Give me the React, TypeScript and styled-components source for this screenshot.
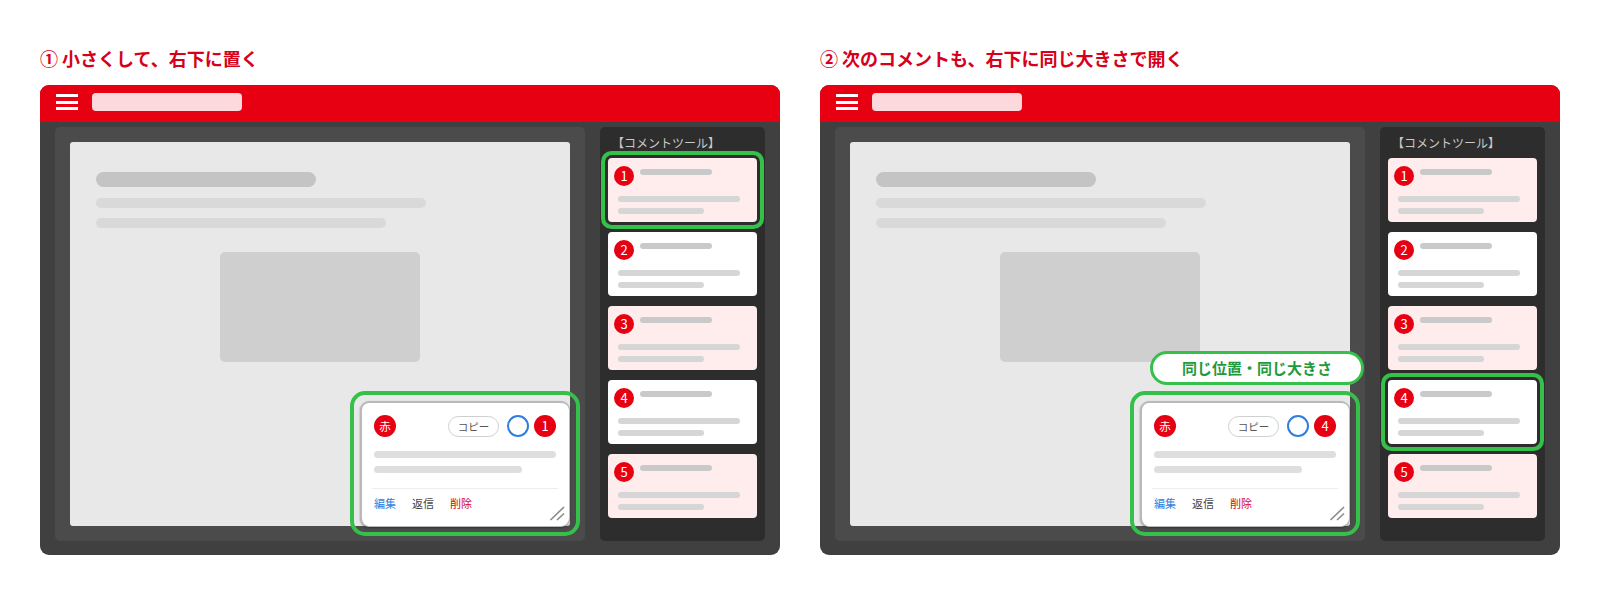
import React from "react";
import styled, { createGlobalStyle } from "styled-components";

const Global = createGlobalStyle`
  html, body { margin: 0; padding: 0; background: #fff; }
  body { font-family: "Noto Sans CJK JP", "Noto Sans", sans-serif; }
`;

const Page = styled.div`
  width: 1600px;
  height: 600px;
  box-sizing: border-box;
  padding: 45px 40px 0;
  display: grid;
  grid-template-columns: 740px 740px;
  column-gap: 40px;
`;
const Column = styled.section`
  display: flex;
  flex-direction: column;
`;
const Heading = styled.h2`
  margin: 0 0 14px;
  font-size: 18px;
  line-height: 26px;
  font-weight: 700;
  color: #d7001a;
`;
const Window = styled.div`
  height: 470px;
  border-radius: 9px;
  overflow: hidden;
  background: #404040;
  display: flex;
  flex-direction: column;
`;
const Header = styled.header`
  height: 37px;
  flex: none;
  background: #e60012;
  display: flex;
  align-items: center;
  padding: 0 16px 3px;
  box-sizing: border-box;
  gap: 14px;
`;
const Burger = styled.div`
  width: 22px;
  display: flex;
  flex-direction: column;
  gap: 3.5px;
  span { height: 3px; background: #fff; display: block; }
`;
const Search = styled.div`
  width: 150px;
  height: 18px;
  border-radius: 4px;
  background: #fbd9dc;
`;
const Body = styled.div`
  flex: 1;
  display: flex;
  gap: 15px;
  padding: 5px 15px 14px 15px;
`;
const Stage = styled.div`
  width: 530px;
  height: 414px;
  box-sizing: border-box;
  padding: 15px;
  background: #4b4b4b;
  border-radius: 5px;
`;
const Sheet = styled.div`
  position: relative;
  width: 500px;
  height: 384px;
  box-sizing: border-box;
  padding: 30px 26px 0;
  background: #e8e8e8;
  border-radius: 3px;
  display: flex;
  flex-direction: column;
`;
const SheetTitle = styled.div`
  width: 220px;
  height: 15px;
  border-radius: 8px;
  background: #c4c4c4;
`;
const SheetLine = styled.div<{ $w: number; $top: number }>`
  width: ${(p) => p.$w}px;
  height: 10px;
  margin-top: ${(p) => p.$top}px;
  border-radius: 5px;
  background: #d9d9d9;
`;
const SheetImage = styled.div`
  width: 200px;
  height: 110px;
  margin: 24px 0 0 124px;
  border-radius: 5px;
  background: #cfcfcf;
`;
const Popup = styled.div`
  position: absolute;
  right: 0;
  bottom: -1px;
  width: 210px;
  height: 126px;
  box-sizing: border-box;
  padding: 12px 13px 0 12px;
  background: #fff;
  border-radius: 9px;
  border: 2px solid #b9b9b9;
  border-right-width: 1px;
  border-bottom-width: 1px;
  box-shadow: 0 1px 2px rgba(0, 0, 0, 0.35);
  display: flex;
  flex-direction: column;
`;
const PopupRing = styled.div`
  position: absolute;
  right: -10px;
  bottom: -10px;
  width: 230px;
  height: 145px;
  box-sizing: border-box;
  border: 4px solid #35c04a;
  border-radius: 15px;
`;
const Callout = styled.div`
  position: absolute;
  right: -14px;
  bottom: 141px;
  width: 214px;
  height: 34px;
  box-sizing: border-box;
  border: 3px solid #35c04a;
  border-radius: 17px;
  background: #fff;
  color: #1f9a3c;
  font-size: 15px;
  font-weight: 700;
  line-height: 27px;
  text-align: center;
`;
const PopupTop = styled.div`
  display: flex;
  align-items: center;
  height: 22px;
`;
const Dot = styled.span<{ $size: number; $font: number }>`
  flex: none;
  width: ${(p) => p.$size}px;
  height: ${(p) => p.$size}px;
  border-radius: 50%;
  background: #e60012;
  color: #fff;
  font-size: ${(p) => p.$font}px;
  line-height: ${(p) => p.$size}px;
  text-align: center;
`;
const Copy = styled.span`
  margin-left: auto;
  width: 51px;
  height: 21px;
  box-sizing: border-box;
  border: 1px solid #cfcfcf;
  border-radius: 11px;
  color: #555;
  font-size: 10.5px;
  line-height: 19px;
  text-align: center;
`;
const Ring = styled.span`
  width: 22px;
  height: 22px;
  box-sizing: border-box;
  margin: 0 5px 0 8px;
  border: 2px solid #2f7fe0;
  border-radius: 50%;
`;
const PopupLine = styled.div<{ $w: number; $top: number }>`
  width: ${(p) => p.$w}px;
  height: 7px;
  margin-top: ${(p) => p.$top}px;
  border-radius: 4px;
  background: #dedede;
`;
const Actions = styled.div`
  margin: 15px -2px 0;
  padding: 5px 2px 0;
  border-top: 1px solid #eee;
  display: flex;
  gap: 16px;
  font-size: 11px;
  line-height: 18px;
`;
const Action = styled.span<{ $color: string }>`
  color: ${(p) => p.$color};
`;
const Grip = styled.svg`
  position: absolute;
  right: 4px;
  bottom: 5px;
`;
const Sidebar = styled.aside`
  width: 165px;
  height: 414px;
  box-sizing: border-box;
  padding: 0 8px;
  background: #2d2d2d;
  border-radius: 5px;
  display: flex;
  flex-direction: column;
`;
const SidebarTitle = styled.div`
  height: 31px;
  padding-left: 4px;
  box-sizing: border-box;
  color: #c9c9c9;
  font-size: 12px;
  line-height: 32px;
`;
const Cards = styled.div`
  display: flex;
  flex-direction: column;
  gap: 10px;
`;
const Card = styled.div<{ $pink: boolean; $active: boolean }>`
  height: 64px;
  box-sizing: border-box;
  padding: 8px 6px;
  border-radius: 4px;
  background: ${(p) => (p.$pink ? "#ffecec" : "#fff")};
  box-shadow: ${(p) => (p.$active ? "0 0 0 3px #2d2d2d, 0 0 0 7px #35c04a" : "none")};
`;
const CardHead = styled.div`
  display: flex;
  gap: 6px;
`;
const CardTitle = styled.div`
  width: 72px;
  height: 6px;
  margin-top: 3px;
  border-radius: 3px;
  background: #c9c9c9;
`;
const CardLine = styled.div<{ $w: number }>`
  width: ${(p) => p.$w}px;
  height: 6px;
  margin: 0 0 6px 4px;
  border-radius: 3px;
  background: #d6d6d6;
`;
const CardLines = styled.div`
  margin-top: 10px;
`;

const ITEMS = [1, 2, 3, 4, 5];

function Diagram({ title, active, callout }: { title: string; active: number; callout: boolean }) {
  return (
    <Column>
      <Heading>{title}</Heading>
      <Window>
        <Header>
          <Burger>
            <span />
            <span />
            <span />
          </Burger>
          <Search />
        </Header>
        <Body>
          <Stage>
            <Sheet>
              <SheetTitle />
              <SheetLine $w={330} $top={11} />
              <SheetLine $w={290} $top={10} />
              <SheetImage />
              {callout && <Callout>同じ位置・同じ大きさ</Callout>}
              <PopupRing />
              <Popup>
                <PopupTop>
                  <Dot $size={22} $font={11.5}>赤</Dot>
                  <Copy>コピー</Copy>
                  <Ring />
                  <Dot $size={22} $font={13}>{active}</Dot>
                </PopupTop>
                <PopupLine $w={182} $top={14} />
                <PopupLine $w={148} $top={8} />
                <Actions>
                  <Action $color="#2f7fe0">編集</Action>
                  <Action $color="#444">返信</Action>
                  <Action $color="#d7001a">削除</Action>
                </Actions>
                <Grip width="16" height="16" viewBox="0 0 16 16" fill="none" stroke="#8a8a8a" strokeWidth="1.6">
                  <path d="M1.5 15 L15 2" />
                  <path d="M8 15 L15 8.5" />
                </Grip>
              </Popup>
            </Sheet>
          </Stage>
          <Sidebar>
            <SidebarTitle>【コメントツール】</SidebarTitle>
            <Cards>
              {ITEMS.map((n) => (
                <Card key={n} $pink={n % 2 === 1} $active={n === active}>
                  <CardHead>
                    <Dot $size={20} $font={13}>{n}</Dot>
                    <CardTitle />
                  </CardHead>
                  <CardLines>
                    <CardLine $w={122} />
                    <CardLine $w={86} />
                  </CardLines>
                </Card>
              ))}
            </Cards>
          </Sidebar>
        </Body>
      </Window>
    </Column>
  );
}

export default function App() {
  return (
    <>
      <Global />
      <Page>
        <Diagram title="① 小さくして、右下に置く" active={1} callout={false} />
        <Diagram title="② 次のコメントも、右下に同じ大きさで開く" active={4} callout />
      </Page>
    </>
  );
}
